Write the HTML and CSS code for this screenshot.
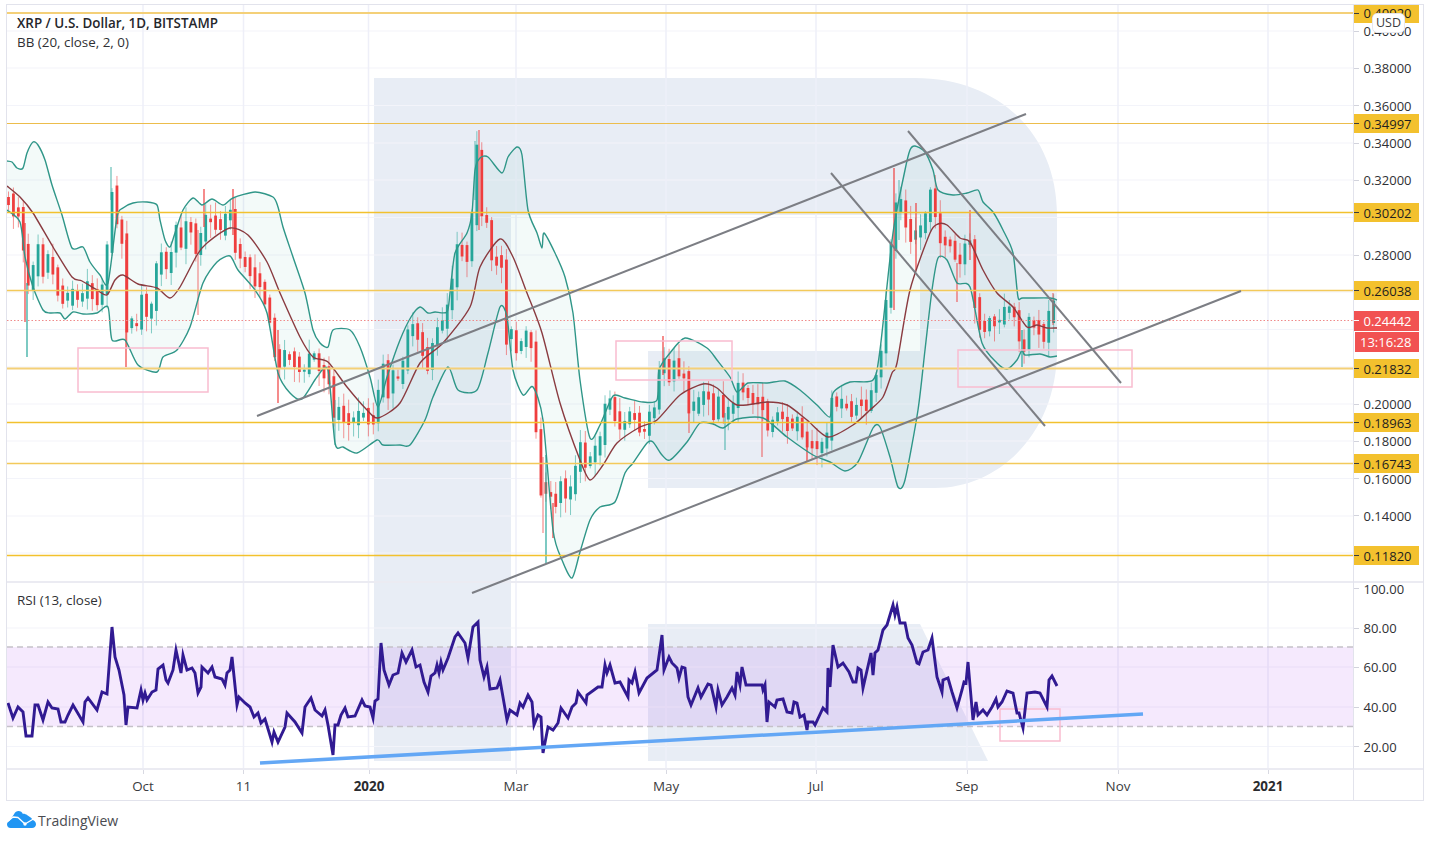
FILE: index.html
```html
<!DOCTYPE html>
<html lang="en">
<head>
  <meta charset="UTF-8" />
  <title>XRP / U.S. Dollar</title>
  <link rel="stylesheet" href="styles.css">
</head>
<body>
<div class="page">
  <div class="chart">
    <div class="plot">
      <svg class="canvas" id="canvas" viewBox="7 5 1346 765" width="1346" height="765">
        <!-- watermark R -->
        <path class="mark" d="M374 78H915C1000 78 1057 135 1057 215V350C1057 432 1000 488 935 488H648V351H920V215H511V761H374Z" />
        <path class="mark" d="M648 624H920L988 761H648Z" />
        <g id="grid" class="grid"></g>
        <rect class="rsi-band" x="7" y="647" width="1347" height="79.500" />
        <line class="rsi-limit" x1="7" y1="647" x2="1353" y2="647" />
        <line class="rsi-limit" x1="7" y1="726.500" x2="1353" y2="726.500" />
        <line class="pane-line" x1="7" y1="582" x2="1354" y2="582" />
        <path id="bbFill" class="bb-fill" />
        <g id="candles"></g>
        <path id="bbUpper" class="bb-line" />
        <path id="bbLower" class="bb-line" />
        <path id="bbBasis" class="bb-basis" />
        <line class="level pale" x1="7" y1="13" x2="1354" y2="13" />
        <line class="level thin" x1="7" y1="123.500" x2="1354" y2="123.500" />
        <line class="level" x1="7" y1="212.500" x2="1354" y2="212.500" />
        <line class="level pale-thin" x1="7" y1="290.500" x2="1354" y2="290.500" />
        <line class="last-price" x1="7" y1="320.500" x2="1354" y2="320.500" />
        <line class="level pale" x1="7" y1="368.500" x2="1354" y2="368.500" />
        <line class="level" x1="7" y1="422.500" x2="1354" y2="422.500" />
        <line class="level pale-thin" x1="7" y1="463.500" x2="1354" y2="463.500" />
        <line class="level" x1="7" y1="555.500" x2="1354" y2="555.500" />
        <rect class="zone" x="78" y="348" width="130" height="44" />
        <rect class="zone" x="616" y="341" width="116" height="39" />
        <rect class="zone" x="958" y="350" width="174" height="37" />
        <rect class="zone" x="1000" y="709" width="60" height="32" />
        <line class="trend" x1="257" y1="416" x2="1026" y2="114" />
        <line class="trend" x1="472" y1="593" x2="1241" y2="291" />
        <line class="trend" x1="831" y1="173" x2="1045" y2="426" />
        <line class="trend" x1="908" y1="131" x2="1121" y2="383" />
        <polyline id="rsiLine" class="rsi-line" />
        <line class="rsi-trend" x1="260" y1="763" x2="1143" y2="714" />
      </svg>
      <div class="legend legend-main">
        <div class="legend-title">XRP / U.S. Dollar, 1D, BITSTAMP</div>
        <div>BB (20, close, 2, 0)</div>
      </div>
      <div class="legend legend-rsi">RSI (13, close)</div>
    </div>

    <div class="price-axis">
      <span class="tick" style="top:27px">0.40000</span>
      <span class="tick" style="top:64px">0.38000</span>
      <span class="tick" style="top:101.5px">0.36000</span>
      <span class="tick" style="top:139px">0.34000</span>
      <span class="tick" style="top:176px">0.32000</span>
      <span class="tick" style="top:251px">0.28000</span>
      <span class="tick" style="top:400px">0.20000</span>
      <span class="tick" style="top:437px">0.18000</span>
      <span class="tick" style="top:474.5px">0.16000</span>
      <span class="tick" style="top:511.5px">0.14000</span>
      <span class="tick tag" style="top:9px">0.40920</span>
      <span class="tick tag" style="top:119.5px">0.34997</span>
      <span class="tick tag" style="top:208.5px">0.30202</span>
      <span class="tick tag" style="top:286.5px">0.26038</span>
      <span class="tick tag red" style="top:316px">0.24442</span>
      <span class="tick countdown" style="top:337px">13:16:28</span>
      <span class="tick tag" style="top:364.5px">0.21832</span>
      <span class="tick tag" style="top:418.5px">0.18963</span>
      <span class="tick tag" style="top:459.5px">0.16743</span>
      <span class="tick tag" style="top:551.5px">0.11820</span>
      <div class="pane-split"></div>
      <span class="tick" style="top:584.5px">100.00</span>
      <span class="tick" style="top:624px">80.00</span>
      <span class="tick" style="top:663px">60.00</span>
      <span class="tick" style="top:703px">40.00</span>
      <span class="tick" style="top:742.5px">20.00</span>
      <div class="currency">USD</div>
    </div>

    <div class="time-axis">
      <span class="date" style="left:129px">Oct</span>
      <span class="date" style="left:229.5px">11</span>
      <span class="date strong" style="left:355px">2020</span>
      <span class="date" style="left:502px">Mar</span>
      <span class="date" style="left:652px">May</span>
      <span class="date" style="left:802px">Jul</span>
      <span class="date" style="left:953px">Sep</span>
      <span class="date" style="left:1104px">Nov</span>
      <span class="date strong" style="left:1254px">2021</span>
    </div>
    <div class="axis-corner"></div>
  </div>

  <div class="brand">
    <svg class="brand-logo" viewBox="0 0 29 18" width="29" height="18">
      <path fill="#2196f3" d="M3.600 17C1.400 17 0 15.300 0 13.400C0 11.800 1 10.500 2.400 10L7 3.300C8 1 9.800 0 11.500 0C13.500 0 15.200 1.300 15.900 3C16.500 2.500 19.400 3.500 20 3.900L24 6.700C24.800 7.200 25.200 7.900 25.300 8.700C27.500 9.300 29 11 29 13.200C29 15.400 27.300 17 25 17Z" />
      <path fill="none" stroke="#fff" stroke-width="1.300" stroke-linejoin="round" d="M0 11L6 6L11 6.500L18 13L28 7" />
      <circle cx="18" cy="13" r="1.700" fill="#fff" />
    </svg>
    <span class="brand-name">TradingView</span>
  </div>
</div>
<script src="chart.js"></script>
</body>
</html>
```

FILE: styles.css
```css
* {
  box-sizing: border-box;
  margin: 0;
  padding: 0;
}

html, body {
  height: 100%;
  background: #fff;
  font-family: "Open Sans", "Noto Sans", sans-serif;
  color: #2f3034;
}

.page {
  width: 1431px;
  height: 841px;
  padding: 4px 7px 0 6px;
  overflow: hidden;
}

.chart {
  display: grid;
  grid-template-columns: 1346px 70px;
  grid-template-rows: 765px 30px;
  width: 1418px;
  height: 797px;
  border: 1px solid #e2e3ec;
}

.plot {
  position: relative;
  border-bottom: 2px solid #ebebf2;
  overflow: hidden;
}

.canvas {
  display: block;
}

.legend {
  position: absolute;
  left: 10px;
  font-size: 13.400px;
  line-height: 19px;
}

.legend-main {
  top: 8.500px;
}

.legend-title {
  font-weight: 600;
  color: #26272b;
}

.legend-rsi {
  top: 586px;
}

/* chart pieces */
.mark {
  fill: #e8edf5;
}

.grid line {
  stroke: #f3f4fa;
  stroke-width: 1.200;
}

.grid line.vert {
  stroke: #eeeff8;
  stroke-width: 1.500;
}

.pane-line {
  stroke: #ebebf2;
  stroke-width: 2;
}

.rsi-band {
  fill: rgba(156, 39, 240, 0.1);
}

.rsi-limit {
  stroke: #c5c1c9;
  stroke-width: 1.400;
  stroke-dasharray: 6 4;
}

.bb-fill {
  fill: rgba(38, 166, 154, 0.055);
}

.bb-line {
  fill: none;
  stroke: #2f9688;
  stroke-width: 1.400;
}

.bb-basis {
  fill: none;
  stroke: #8a3b40;
  stroke-width: 1.400;
}

.level {
  stroke: #f2c12e;
  stroke-width: 1.300;
}

.level.thin {
  stroke: #ecbd4c;
  stroke-width: 1;
}

.level.pale {
  stroke: #f4d078;
  stroke-width: 1.800;
}

.level.pale-thin {
  stroke: #f3c95a;
  stroke-width: 1.300;
}

.last-price {
  stroke: #f08a8a;
  stroke-width: 1.200;
  stroke-dasharray: 1.500 2;
}

.zone {
  fill: none;
  stroke: #f9bccf;
  stroke-width: 1.500;
}

.trend {
  stroke: #7c7e84;
  stroke-width: 2;
}

.rsi-line {
  fill: none;
  stroke: #311a92;
  stroke-width: 2.900;
  stroke-linejoin: miter;
  stroke-miterlimit: 6;
}

.rsi-trend {
  stroke: #63a7f5;
  stroke-width: 3.500;
}

/* axes */
.price-axis {
  position: relative;
  border-left: 1px solid #e2e3ec;
  border-bottom: 2px solid #ebebf2;
  overflow: hidden;
}

.tick {
  position: absolute;
  left: 0;
  display: flex;
  align-items: center;
  width: 65px;
  height: 19px;
  margin-top: -10.500px;
  padding-left: 9.500px;
  font-size: 13px;
  color: #2f3034;
}

.tick::before {
  content: "";
  position: absolute;
  left: 0;
  top: 9px;
  width: 5px;
  height: 1px;
  background: #d2d3dc;
}

.tag {
  background: #f3c12e;
  color: #1e1e20;
}

.tag::before {
  background: #3a3a3a;
}

.tag.red {
  height: 20px;
  background: #f15252;
  color: #fff;
}

.tag.red::before {
  background: #fff;
}

.countdown {
  left: 1px;
  width: 64px;
  height: 20px;
  padding-left: 5px;
  background: #f15252;
  color: #fff;
}

.countdown::before {
  display: none;
}

.pane-split {
  position: absolute;
  left: 0;
  right: 0;
  top: 576px;
  height: 2px;
  background: #ebebf2;
}

.currency {
  position: absolute;
  left: 18px;
  top: 8px;
  width: 33px;
  height: 20px;
  background: #fff;
  border: 1px solid #e6e7ee;
  border-radius: 5px;
  font-size: 12.500px;
  line-height: 18px;
  text-align: center;
  color: #3a3b40;
}

.time-axis {
  position: relative;
}

.date {
  position: absolute;
  top: 7px;
  width: 14px;
  display: flex;
  justify-content: center;
  white-space: nowrap;
  font-size: 13.400px;
  line-height: 18px;
  color: #3a3b40;
}

.date::before {
  content: "";
  position: absolute;
  left: 6.500px;
  top: -7px;
  width: 1px;
  height: 4px;
  background: #d8d9e2;
}

.date.strong {
  font-weight: 700;
  color: #2a2b2f;
}

.axis-corner {
  border-left: 1px solid #e2e3ec;
}

.brand {
  display: flex;
  align-items: center;
  gap: 2px;
  height: 30px;
  padding-left: 1px;
  margin-top: 4px;
}

.brand-logo {
  display: block;
}

.brand-name {
  font-size: 14px;
  color: #4a4b50;
}
```

FILE: chart.js
```js
// price pane data, in chart coordinates read off the picture
const closes = [[8,197],[13,213],[17,210],[22,220],[25,287],[32,283],[35,253],[39,250],[42,273],[47,260],[50,260],[53,273],[60,297],[65,303],[72,293],[80,300],[87,287],[97,303],[102,290],[108,243],[111,192],[113,193],[117,223],[122,240],[126,277],[127,337],[132,323],[138,327],[142,297],[147,317],[152,303],[157,263],[163,250],[168,277],[175,223],[180,247],[185,227],[192,230],[198,263],[203,220],[213,220],[220,230],[230,210],[233,235],[237,260],[243,257],[250,273],[260,287],[267,303],[272,337],[278,367],[283,357],[293,357],[302,377],[312,350],[320,373],[328,373],[333,403],[335,430],[338,410],[350,423],[362,413],[373,423],[380,387],[382,360],[388,393],[395,370],[400,383],[410,323],[417,337],[423,353],[428,367],[435,330],[442,327],[448,307],[453,280],[455,250],[462,250],[468,263],[473,207],[475,167],[477,150],[480,200],[483,227],[487,220],[490,260],[497,260],[500,247],[503,283],[507,347],[512,333],[517,353],[525,337],[530,320],[533,397],[543,513],[548,477],[553,510],[562,480],[568,503],[575,473],[580,447],[587,470],[590,457],[600,443],[605,407],[612,400],[617,427],[625,423],[633,410],[638,427],[643,437],[650,410],[657,407],[659,370],[663,357],[668,380],[673,363],[682,380],[687,370],[689,413],[697,403],[707,393],[713,417],[718,400],[725,417],[733,405],[738,383],[745,393],[752,400],[762,400],[767,427],[775,417],[783,417],[790,430],[798,423],[807,443],[817,448],[825,445],[828,427],[833,393],[837,407],[845,403],[853,413],[858,402],[865,410],[872,390],[877,373],[882,347],[885,313],[892,237],[894,203],[898,210],[902,200],[908,233],[913,237],[920,230],[926,217],[932,187],[936,223],[940,237],[950,243],[957,263],[962,260],[968,227],[971,250],[973,290],[977,320],[983,333],[990,320],[998,323],[1007,307],[1013,310],[1017,333],[1022,350],[1025,343],[1028,323],[1037,327],[1045,340],[1050,310],[1053,300],[1057,320]];

// long wicks: x, top, bottom, colour, opacity
const wicks = [[25,223,322,'r',1],[27,283,357,'g',1],[111,167,200,'g',.7],[126,240,367,'r',1],[198,230,315,'r',.6],[204,189,227,'r',1],[233,189,235,'r',1],[278,330,403,'r',1],[335,400,445,'g',.6],[479,130,230,'r',.8],[475,141,200,'g',.6],[543,457,533,'r',.6],[546,455,563,'g',1],[553,503,538,'r',1],[663,336,375,'r',1],[689,390,433,'r',.7],[725,413,450,'g',.7],[762,400,457,'r',.7],[807,443,462,'r',1],[894,168,310,'r',1],[899,180,240,'g',.6],[916,203,270,'r',1],[957,263,302,'r',.8],[970,210,260,'r',.9],[1022,330,367,'g',1],[1053,293,325,'r',.7]];

const upper = [[7,161],[12,162],[17,168],[23,168],[27,153],[33,142],[38,145],[45,160],[52,185],[62,215],[72,248],[83,247],[90,262],[100,275],[108,283],[117,217],[123,208],[133,203],[147,202],[157,205],[160,220],[165,240],[170,247],[175,233],[183,210],[193,198],[202,205],[212,199],[223,205],[233,198],[255,192],[273,197],[278,207],[283,227],[293,257],[305,293],[313,330],[320,343],[328,347],[333,330],[350,330],[360,347],[370,377],[378,407],[387,377],[400,340],[411,317],[420,307],[428,313],[435,312],[447,312],[450,293],[455,253],[467,233],[472,213],[475,170],[480,158],[488,157],[502,173],[508,157],[517,147],[522,155],[528,210],[537,233],[542,248],[544,233],[555,253],[565,277],[573,313],[580,380],[590,438],[600,425],[613,396],[625,398],[643,402],[657,400],[659,370],[670,353],[685,338],[707,348],[717,360],[730,377],[737,392],[748,383],[767,383],[785,381],[800,390],[817,405],[830,417],[833,393],[850,382],[873,380],[880,350],[893,233],[905,170],[910,150],[915,146],[925,152],[933,170],[938,190],[953,195],[967,193],[978,190],[983,202],[993,212],[1003,230],[1013,253],[1018,297],[1023,298],[1050,298],[1057,300]];

const lower = [[7,210],[20,222],[25,257],[33,287],[43,310],[50,313],[60,313],[65,319],[73,312],[83,314],[97,313],[108,307],[112,340],[125,340],[138,365],[157,372],[163,357],[177,350],[190,327],[203,283],[217,262],[230,256],[238,270],[255,290],[267,313],[278,373],[290,393],[302,399],[317,377],[328,370],[335,443],[343,447],[357,453],[377,440],[383,445],[400,445],[410,445],[425,420],[433,397],[448,367],[458,390],[477,390],[488,353],[500,307],[507,317],[513,370],[523,395],[533,387],[543,420],[553,530],[562,560],[572,578],[580,552],[590,520],[600,507],[615,502],[625,473],[633,463],[647,443],[653,442],[662,455],[670,460],[687,442],[700,423],[713,424],[723,428],[737,419],[763,418],[787,437],[813,455],[830,462],[845,471],[858,462],[873,428],[880,427],[890,457],[898,487],[905,480],[918,410],[925,350],[932,290],[938,258],[947,260],[957,283],[970,287],[982,343],[997,363],[1007,369],[1017,360],[1022,350],[1025,355],[1040,354],[1050,357],[1057,356]];

const basis = [[7,186],[20,197],[33,213],[53,247],[72,277],[82,281],[97,290],[107,295],[115,280],[123,275],[138,284],[157,288],[170,298],[180,287],[197,255],[207,243],[230,228],[248,235],[267,262],[280,293],[300,337],[313,357],[328,362],[347,387],[367,410],[378,418],[400,403],[420,363],[443,343],[470,307],[480,267],[500,239],[513,257],[527,293],[542,333],[560,403],[580,460],[590,480],[603,465],[617,443],[640,427],[657,420],[680,395],[703,384],[717,388],[737,405],[767,402],[787,405],[807,420],[828,437],[853,425],[870,410],[883,397],[892,373],[897,363],[910,290],[930,233],[938,224],[947,225],[960,238],[970,242],[983,270],[997,293],[1013,307],[1027,327],[1037,325],[1047,328],[1057,328]];

const rsi = [[8,703],[13,718],[18,707],[23,712],[26,736],[32,736],[35,705],[38,705],[43,720],[48,702],[52,708],[58,709],[61,722],[65,722],[68,715],[73,705],[83,722],[85,702],[88,698],[97,710],[102,692],[107,694],[112,627],[115,657],[119,670],[124,695],[126,725],[128,707],[137,708],[141,690],[143,700],[145,693],[147,700],[152,692],[156,690],[158,669],[163,665],[166,680],[168,683],[173,670],[176,650],[181,673],[183,655],[187,670],[192,668],[195,673],[198,693],[201,687],[202,667],[208,673],[212,667],[215,677],[222,679],[225,685],[227,673],[230,670],[232,657],[237,705],[239,697],[245,703],[250,707],[254,717],[258,713],[261,723],[265,719],[272,742],[274,732],[278,742],[285,727],[287,713],[295,722],[302,733],[305,707],[311,698],[315,710],[322,716],[325,710],[328,725],[333,755],[335,725],[338,725],[341,715],[345,708],[348,717],[355,716],[362,700],[365,706],[370,707],[373,718],[375,701],[378,699],[381,643],[384,670],[389,685],[393,675],[398,673],[402,653],[406,662],[412,650],[416,667],[420,665],[424,682],[428,692],[431,676],[435,673],[437,665],[439,673],[441,662],[443,670],[448,658],[455,637],[458,633],[465,643],[468,658],[473,627],[478,622],[480,660],[484,677],[487,667],[490,689],[497,688],[500,680],[507,720],[510,710],[517,715],[520,703],[523,707],[528,695],[532,702],[534,725],[538,715],[541,717],[543,753],[548,727],[553,730],[558,723],[561,708],[568,718],[572,707],[576,703],[578,692],[586,703],[587,695],[598,687],[602,687],[605,665],[607,673],[610,665],[615,683],[620,682],[628,697],[629,680],[632,683],[635,672],[639,693],[647,678],[657,670],[662,635],[664,670],[669,657],[672,663],[677,668],[679,678],[682,667],[685,668],[688,697],[691,705],[698,688],[701,697],[708,684],[711,685],[716,707],[718,690],[722,705],[727,697],[732,688],[735,695],[737,672],[740,685],[742,667],[746,685],[753,685],[762,685],[763,690],[765,685],[767,722],[769,702],[775,707],[777,700],[783,699],[787,712],[792,713],[794,702],[797,703],[800,717],[804,715],[807,730],[808,722],[813,722],[815,725],[823,708],[827,712],[828,668],[830,687],[833,645],[838,667],[843,663],[847,669],[849,672],[853,682],[856,682],[858,668],[861,670],[863,688],[871,653],[873,675],[875,653],[878,650],[883,630],[887,625],[893,605],[895,615],[897,607],[900,623],[905,623],[908,638],[912,645],[917,663],[919,664],[923,652],[928,650],[932,638],[937,677],[942,692],[943,680],[948,678],[952,692],[957,708],[962,690],[964,682],[966,683],[968,662],[973,720],[976,702],[978,715],[983,710],[987,715],[992,707],[996,699],[998,707],[1002,702],[1007,691],[1013,693],[1017,713],[1019,713],[1023,728],[1027,693],[1035,692],[1040,693],[1047,707],[1049,680],[1052,676],[1057,686]];

const NS = 'http://www.w3.org/2000/svg';
const GREEN = '#26a69a';
const RED = '#ef3e3e';

function toPoints(list) {
  return list.map(p => p[0] + ',' + p[1]).join(' ');
}

// smooth curve through the points
function smooth(list, move) {
  let d = (move ? 'M' : 'L') + list[0][0] + ' ' + list[0][1];
  for (let i = 0; i < list.length - 1; i++) {
    const p0 = list[Math.max(i - 1, 0)];
    const p1 = list[i];
    const p2 = list[i + 1];
    const p3 = list[Math.min(i + 2, list.length - 1)];
    const c1x = p1[0] + (p2[0] - p0[0]) / 8;
    const c1y = p1[1] + (p2[1] - p0[1]) / 8;
    const c2x = p2[0] - (p3[0] - p1[0]) / 8;
    const c2y = p2[1] - (p3[1] - p1[1]) / 8;
    d += 'C' + c1x + ' ' + c1y + ' ' + c2x + ' ' + c2y + ' ' + p2[0] + ' ' + p2[1];
  }
  return d;
}

function line(parent, x1, y1, x2, y2, attrs) {
  const el = document.createElementNS(NS, 'line');
  el.setAttribute('x1', x1);
  el.setAttribute('y1', y1);
  el.setAttribute('x2', x2);
  el.setAttribute('y2', y2);
  for (const k in attrs) el.setAttribute(k, attrs[k]);
  parent.appendChild(el);
}

// grid
const grid = document.getElementById('grid');
[31, 68, 105.5, 143, 180, 217.5, 255, 292, 329.5, 367, 404, 441, 478.5, 516, 553, 628, 667, 707, 746.5].forEach(y => {
  line(grid, 7, y, 1354, y, {});
});
[143, 243.5, 368.5, 516, 666, 816, 967, 1118, 1268].forEach(x => {
  line(grid, x, 4, x, 769, { class: 'vert' });
});

// bollinger
document.getElementById('bbFill').setAttribute('d', smooth(upper, true) + smooth(lower.slice().reverse(), false) + 'Z');
document.getElementById('bbUpper').setAttribute('d', smooth(upper, true));
document.getElementById('bbLower').setAttribute('d', smooth(lower, true));
document.getElementById('bbBasis').setAttribute('d', smooth(basis, true));
document.getElementById('rsiLine').setAttribute('points', toPoints(rsi));

// candles
function closeAt(x) {
  if (x <= closes[0][0]) return closes[0][1];
  for (let i = 1; i < closes.length; i++) {
    if (x <= closes[i][0]) {
      const a = closes[i - 1], b = closes[i];
      return a[1] + (b[1] - a[1]) * (x - a[0]) / (b[0] - a[0]);
    }
  }
  return closes[closes.length - 1][1];
}

let seed = 7;
function rnd() {
  seed = (seed * 16807) % 2147483647;
  return seed / 2147483647;
}

const candles = document.getElementById('candles');
let prev = closeAt(7);
for (let x = 8.5; x <= 1057; x += 4.93) {
  const close = closeAt(x);
  const open = prev;
  const top = Math.min(open, close) - rnd() * 7;
  const bottom = Math.max(open, close) + rnd() * 7;
  const colour = close < open ? GREEN : RED;
  line(candles, x, top - 2 - rnd() * 12, x, bottom + 2 + rnd() * 14, { stroke: colour, 'stroke-width': 1, opacity: 0.55 });
  line(candles, x, top, x, bottom, { stroke: colour, 'stroke-width': 2.8 });
  prev = close;
}
wicks.forEach(w => {
  line(candles, w[0], w[1], w[0], w[2], { stroke: w[3] === 'r' ? RED : GREEN, 'stroke-width': 1.2, opacity: w[4] });
});
```
